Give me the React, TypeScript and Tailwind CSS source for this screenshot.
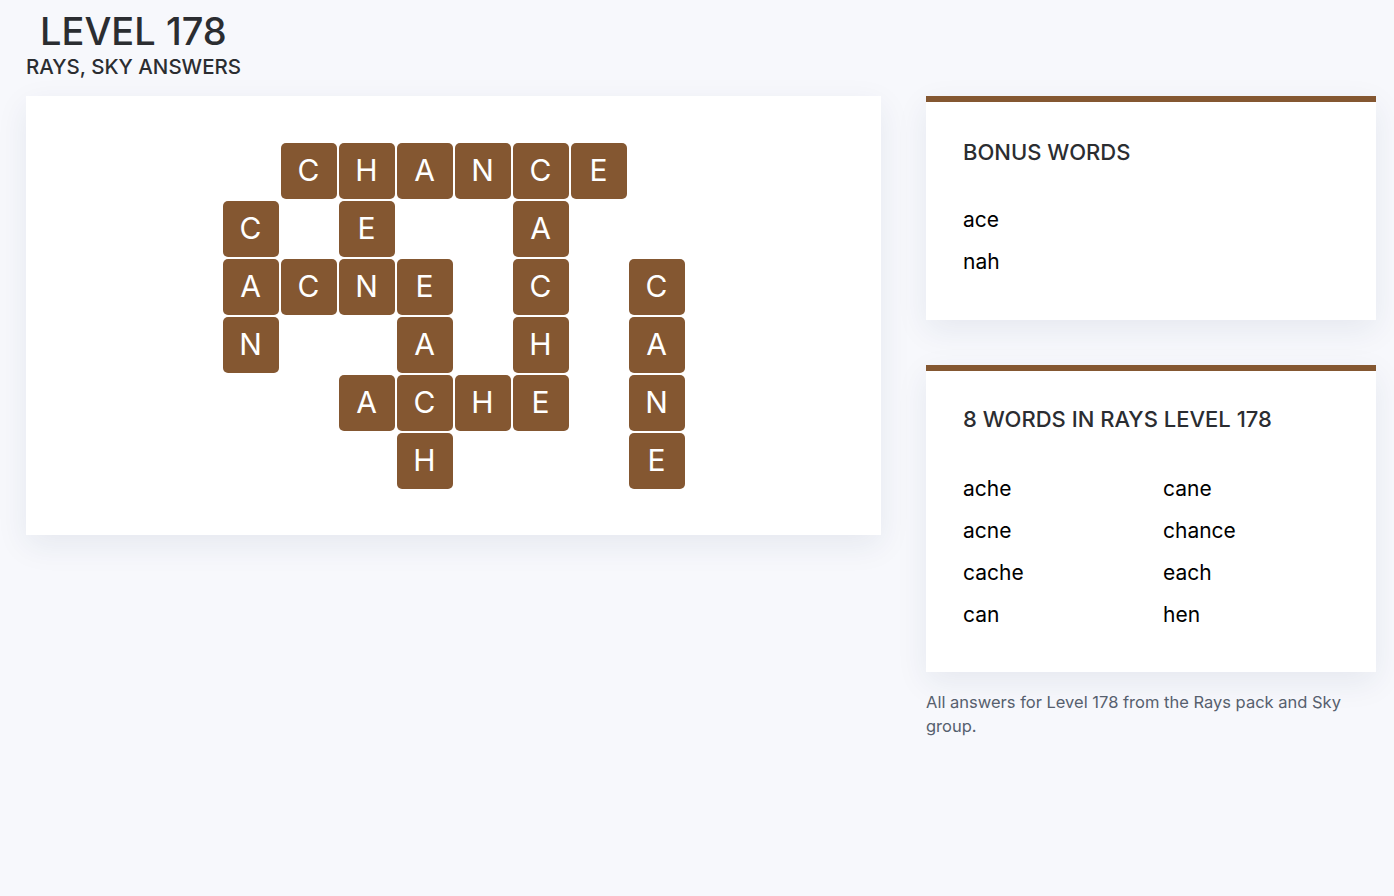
const GRID: string[] = [
  ".CHANCE.",
  "C.E..A..",
  "ACNE.C.C",
  "N..A.H.A",
  "..ACHE.N",
  "...H...E",
];

const BONUS = ["ace", "nah"];
const WORDS = ["ache", "cane", "acne", "chance", "cache", "each", "can", "hen"];

const Tile = ({ letter }: { letter: string }) => {
  if (letter === ".") return <div className="w-[56px] h-[56px]" />;
  return (
    <div className="w-[56px] h-[56px] rounded-[5px] bg-[#845731] text-white text-[30px] flex items-center justify-center">
      {letter}
    </div>
  );
};

const Card = ({
  title,
  pad,
  gap,
  children,
}: {
  title: string;
  pad: string;
  gap: string;
  children: React.ReactNode;
}) => (
  <div
    className={`bg-white border-t-[6px] border-[#845731] shadow-[0_10px_30px_rgba(30,50,90,0.08)] px-[37px] ${pad}`}
  >
    <h2 className="text-[22px] leading-[28px] text-[#2b2d31] font-medium">{title}</h2>
    <div className={gap}>{children}</div>
  </div>
);

export default function App() {
  return (
    <div
      className="min-h-[896px] bg-[#f7f8fc] text-[#2b2d31]"
      style={{ fontFamily: "Inter, 'Noto Sans', sans-serif" }}
    >
      <div className="pl-[26px] pt-[8px]">
        <h1 className="pl-[14px] text-[38px] leading-[46px] font-medium">LEVEL 178</h1>
        <p className="text-[20.5px] leading-[26px] font-medium">RAYS, SKY ANSWERS</p>
      </div>
      <div className="flex gap-[45px] pl-[26px] mt-[16px]">
        <div className="w-[855px] h-[439px] bg-white shadow-[0_10px_30px_rgba(30,50,90,0.08)] flex items-center justify-center">
          <div className="grid grid-cols-[repeat(8,56px)] gap-[2px]">
            {GRID.flatMap((row, r) =>
              row.split("").map((ch, c) => <Tile key={`${r}-${c}`} letter={ch} />)
            )}
          </div>
        </div>
        <div className="w-[450px] flex flex-col">
          <Card title="BONUS WORDS" pad="pt-[36px] pb-[37px]" gap="mt-[33px]">
            {BONUS.map((w) => (
              <p key={w} className="text-[21px] leading-[42px] text-black">
                {w}
              </p>
            ))}
          </Card>
          <div className="mt-[45px]">
            <Card title="8 WORDS IN RAYS LEVEL 178" pad="pt-[34px] pb-[36px]" gap="mt-[35px]">
              <div className="grid grid-cols-[200px_1fr]">
                {WORDS.map((w) => (
                  <p key={w} className="text-[21px] leading-[42px] text-black">
                    {w}
                  </p>
                ))}
              </div>
            </Card>
          </div>
          <p className="mt-[18px] text-[16.5px] leading-[24px] text-[#56606e]">
            All answers for Level 178 from the Rays pack and Sky group.
          </p>
        </div>
      </div>
    </div>
  );
}
